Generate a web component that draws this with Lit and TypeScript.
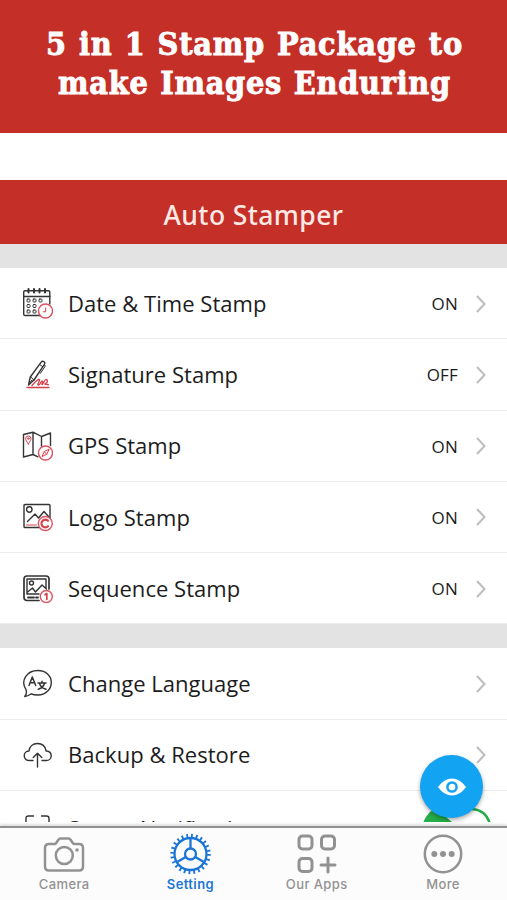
import { LitElement, html, svg, css } from "lit";
import { customElement } from "lit/decorators.js";

const icon = (body: unknown) => html`<svg class="icon" viewBox="0 0 32 32" width="32" height="32">${body}</svg>`;

const calendar = icon(svg`
  <g class="ink">
    <path d="M19 27.500H4q-1.300 0-1.300-1.300V4q0-1.300 1.300-1.300h23.500q1.300 0 1.300 1.300v12"/>
    <path d="M2.700 8.500H28.800"/>
    <path d="M7.500 1v3.500M13 1v3.500M18.500 1v3.500M24 1v3.500" stroke-width="2"/>
    <g stroke-width="1"><rect x="6" y="11" width="3" height="3" rx=".8"/><rect x="12" y="11" width="3" height="3" rx=".8"/><rect x="18" y="11" width="3" height="3" rx=".8"/>
    <rect x="6" y="16.500" width="3" height="3" rx=".8"/><rect x="12" y="16.500" width="3" height="3" rx=".8"/>
    <rect x="6" y="22" width="3" height="3" rx=".8"/><rect x="12" y="22" width="3" height="3" rx=".8"/></g>
  </g>
  <circle class="badge" cx="24.500" cy="23" r="7"/><path class="mark" d="M24.700 20v3.800h-2.500"/>`);

const pen = icon(svg`
  <g class="ink">
    <path d="M7.500 26l1.800-8L20.200 3.200q1-1.500 2.600-.5t.6 2.600L13 21z"/>
    <path d="M9.800 18l3.200 3M18.500 5.500l3.200 2.200M8 25l3-4M23.500 5.500l.8 1.500-5 7.500" stroke-width="1"/>
  </g>
  <path class="mark" stroke-width="1.300" d="M6 28.500h22M11 26.500c4-4.500 7.500-7.500 7.500-5.500s-3 5-1 5 2.500-4.500 3.800-4-1.200 3.800 0 3.500 2.200-5.500 4-5 1.500 3-.8 4 2 .5 3 1.200"/>`);

const map = icon(svg`
  <g class="ink">
    <path d="M2.500 4.500L12 2.200v22.300L2.500 27zM12 2.200L20.500 6.500V16M12 24.500l5 2.300M20.500 6.500L29.500 3v12.500"/>
  </g>
  <path class="mark" d="M7.300 14c-1.700-2.800-2.700-4-2.700-5.300a2.700 2.700 0 0 1 5.400 0c0 1.300-1 2.500-2.700 5.300z"/><circle class="mark" cx="7.300" cy="8.600" r=".8"/>
  <circle class="badge" cx="24.500" cy="23" r="7"/><path class="mark" d="M28 19.500l-2.300 4.800-4.700 2.200 2.300-4.800zM23.300 21.700l2.400 2.600"/>`);

const logo = icon(svg`
  <g class="ink">
    <rect x="3" y="3.500" width="26" height="23" rx="1"/><circle cx="8.300" cy="8.500" r="2.700"/>
    <path d="M6.500 20.500l7.500-7.500 3.500 4 5.500-6.500 5 5.500"/>
  </g>
  <path class="mark" d="M5.500 24h10"/>
  <circle class="badge" cx="24.300" cy="22.500" r="7"/><path class="mark" stroke-width="2.200" d="M27 19.800a3.800 3.800 0 1 0 0 5.400"/>`);

const sequence = icon(svg`
  <g class="ink">
    <path d="M18 27.500H6q-3 0-3-3V6q0-3 3-3h19q3 0 3 3v10" stroke-width="1.700"/>
    <path d="M6 21V6h19v9M6 19.500l5.500-4.500 3 4 6.500-7 4.500 4M6 21h12"/><circle cx="10.500" cy="10" r="2"/>
    <path d="M7 24.500h6M15 24.500h2" stroke-width="1.800"/>
  </g>
  <circle class="badge" cx="25.300" cy="23.500" r="6"/><path class="mark" stroke-width="1.700" d="M24 21.800l1.800-1.300v6"/>`);

const language = icon(svg`
  <g class="ink">
    <path d="M5 21.700C-1 12.500 6 2.500 17 2.500c7.800 0 13.300 5.200 13.300 12S24.500 27 17 27c-2.600 0-5-.3-6.800-1.200-2 1.500-4 2.700-6.500 2.700 1.800-2 2.200-4.200 1.300-6.800z"/>
    <path d="M8 17.500l3.300-8.500 3.400 8.500M9 14.800h4.500" stroke-width="1.500"/>
    <path d="M17 15h8M21 13.300V15M23.500 15.300c-.8 3-3 5-6.200 6M18.500 15.500c1 3.200 3 4.800 6.500 5.800" stroke-width="1.500"/>
  </g>`);

const cloud = icon(svg`
  <g class="ink">
    <path d="M12 21.500H9C1.500 21.500 1.500 12.500 8 12c.5-4.500 4-7.500 8.500-7.500s7.800 2.800 8.700 7.500c7 .5 6.300 9.500 0 9.500H21M16.500 28V14.500M12.200 18.500l4.300-4.300 4.300 4.300"/>
  </g>`);

const stampNote = icon(svg`
  <g class="ink"><path d="M5 14V5.500q0-2.500 2.500-2.500h5M20.500 3h5q2.500 0 2.500 2.500v8.500M13.800 11.500c.8-2 4.200-2 5 0"/></g>`);

const camera = svg`<svg viewBox="0 0 42 42" width="42" height="42"><g class="tab-line">
  <path d="M5 11h6.500q1 0 1.700-1l2-3q1-1.500 2.500-1.500h7.600q1.500 0 2.500 1.500l2 3q.7 1 1.700 1H36q4 0 4 4v18.500q0 4-4 4H6q-4 0-4-4V15q0-4 4-4"/>
  <circle cx="21.300" cy="22.500" r="8.500"/></g><circle cx="34" cy="17" r="1.800" fill="currentColor"/></svg>`;

const gear = svg`<svg viewBox="0 0 42 42" width="42" height="42"><g class="tab-line">
  <circle cx="21.500" cy="21" r="18.200" stroke-width="4" stroke-dasharray="1.800 2.964"/>
  <circle class="thin" cx="21.500" cy="21" r="16"/><circle class="thin" cx="21.500" cy="21" r="5.500"/>
  <path class="thin" d="M21.500 15V5.500M16.800 24L8.500 28.800M26.200 24L34.500 28.800"/></g></svg>`;

const apps = svg`<svg viewBox="0 0 42 42" width="42" height="42"><g class="tab-line thick">
  <rect x="3" y="3" width="13" height="13" rx="3.500"/><rect x="25.500" y="3" width="13" height="13" rx="3.500"/>
  <rect x="3" y="25.500" width="13" height="13" rx="3.500"/><path d="M32 25v14M25 32h14" stroke-linecap="round"/></g></svg>`;

const more = svg`<svg viewBox="0 0 42 42" width="42" height="42"><circle class="tab-line" cx="21" cy="21" r="18.200"/>
  <g fill="currentColor"><circle cx="12.300" cy="21" r="3"/><circle cx="21" cy="21" r="3"/><circle cx="29.700" cy="21" r="3"/></g></svg>`;

interface Row { icon: unknown; label: string; value?: string; chevron?: boolean }

const stamps: Row[] = [
  { icon: calendar, label: "Date & Time Stamp", value: "ON" },
  { icon: pen, label: "Signature Stamp", value: "OFF" },
  { icon: map, label: "GPS Stamp", value: "ON" },
  { icon: logo, label: "Logo Stamp", value: "ON" },
  { icon: sequence, label: "Sequence Stamp", value: "ON" },
];

const general: Row[] = [
  { icon: language, label: "Change Language" },
  { icon: cloud, label: "Backup & Restore" },
  { icon: stampNote, label: "Stamp Notification", chevron: false },
];

const tabs = [
  { label: "Camera", art: camera, cls: "tab" },
  { label: "Setting", art: gear, cls: "tab active" },
  { label: "Our Apps", art: apps, cls: "tab" },
  { label: "More", art: more, cls: "tab" },
];

@customElement("app-root")
export class AppRoot extends LitElement {
  static styles = css`
    :host { display: flex; flex-direction: column; position: relative; height: 900px; overflow: hidden; background: #fff;
      font-family: "Open Sans", "Noto Sans", sans-serif; color: #1c1c1c; }
    * { box-sizing: border-box; }
    .promo { flex: none; height: 133px; padding-top: 25px; background: #c42f27; color: #fff; text-align: center;
      font: bold 32px/39px "DejaVu Serif Condensed", "DejaVu Serif", serif; font-stretch: condensed; white-space: nowrap;
      -webkit-text-stroke: .9px #fff; }
    .line-one { letter-spacing: .8px; word-spacing: 1.3px; padding-left: 2px; }
    .line-two { letter-spacing: .75px; word-spacing: 1px; padding-left: 2px; }
    .gap { flex: none; height: 47px; }
    .bar { flex: none; height: 64px; padding-top: 6px; background: #c42f27; color: #ffe9e5; display: flex; align-items: center; justify-content: center;
      font: 500 26.5px "Noto Sans", sans-serif; letter-spacing: .4px; }
    .list { flex: none; height: 578px; overflow: hidden; position: relative; }
    .band { height: 24px; background: #e3e3e3; }
    .row { height: 71.25px; padding: 1px 20px 0 21px; display: flex; align-items: center; border-bottom: 1px solid #ececec; }
    .row.last { height: 76px; }
    .icon { flex: none; margin-left: -.5px; margin-right: 15.5px; }
    .label { flex: 1; font-size: 22px; letter-spacing: .03px; white-space: nowrap; padding-bottom: 1.500px; }
    .value { font-size: 17px; margin-right: 17px; letter-spacing: .2px; }
    .chev { flex: none; }
    .ink { fill: none; stroke: #333; stroke-width: 1.4; stroke-linejoin: round; stroke-linecap: round; }
    .mark { fill: none; stroke: #d6404c; stroke-linecap: round; stroke-linejoin: round; }
    .badge { fill: #fff; stroke: #d95360; stroke-width: 1.4; }
    .ring { position: absolute; left: 418px; top: 559px; }
    .fab { position: absolute; left: 420px; top: 755px; width: 63px; height: 63px; border-radius: 50%; background: #12a3f3;
      box-shadow: 0 2px 4px rgba(0,0,0,.35); display: flex; align-items: center; justify-content: center; }
    .tabs { flex: 1; display: grid; grid-template-columns: repeat(4, 126.3px); border-top: 2px solid #929292; background: #fdfcfc;
      box-shadow: 0 -2px 2px #e2e2e2; padding: 5px 0 0 1px; }
    .shadow { flex: none; height: 4px; }
    .tab { display: flex; flex-direction: column; align-items: center; color: #929292; font: 500 13px/18px Inter, sans-serif; letter-spacing: .4px; }
    .tab.active { color: #1b75d6; font-weight: 600; }
    .tab-line { fill: none; stroke: currentColor; stroke-width: 2.5; }
    .thin { stroke-width: 2.3; }
    .thick { stroke-width: 3; }
  `;

  row(r: Row) {
    return html`<div class=${r.chevron === false ? "row last" : "row"}>${r.icon}<span class="label">${r.label}</span>
      ${r.value ? html`<span class="value">${r.value}</span>` : ""}
      ${r.chevron === false ? "" : html`<svg class="chev" width="12" height="20" viewBox="0 0 12 20"><path d="M2 2l7.500 8L2 18" fill="none" stroke="#bdbdbd" stroke-width="2"/></svg>`}</div>`;
  }

  render() {
    return html`
      <div class="promo"><div class="line-one">5 in 1 Stamp Package to</div><div class="line-two">make Images Enduring</div></div>
      <div class="gap"></div>
      <div class="bar"><span>Auto Stamper</span></div>
      <div class="list">
        <div class="band"></div>${stamps.map((r) => this.row(r))}
        <div class="band"></div>${general.map((r) => this.row(r))}
        <svg class="ring" width="76" height="20" viewBox="0 0 76 20"><path d="M5 20q4-11 13-15l17 15z" fill="#25ad48"/><path d="M54 6q14 1 18 15" fill="none" stroke="#25ad48" stroke-width="2.500"/></svg>
      </div>
      <div class="shadow"></div>
      <div class="tabs">${tabs.map((t) => html`<div class=${t.cls}>${t.art}<span>${t.label}</span></div>`)}</div>
      <div class="fab"><svg width="28" height="20" viewBox="0 0 28 20"><path d="M0 10Q6 1.500 14 1.500T28 10Q22 18.500 14 18.500T0 10z" fill="#fff"/><circle cx="14" cy="10" r="4.600" fill="none" stroke="#12a3f3" stroke-width="2.500"/></svg></div>`;
  }
}
